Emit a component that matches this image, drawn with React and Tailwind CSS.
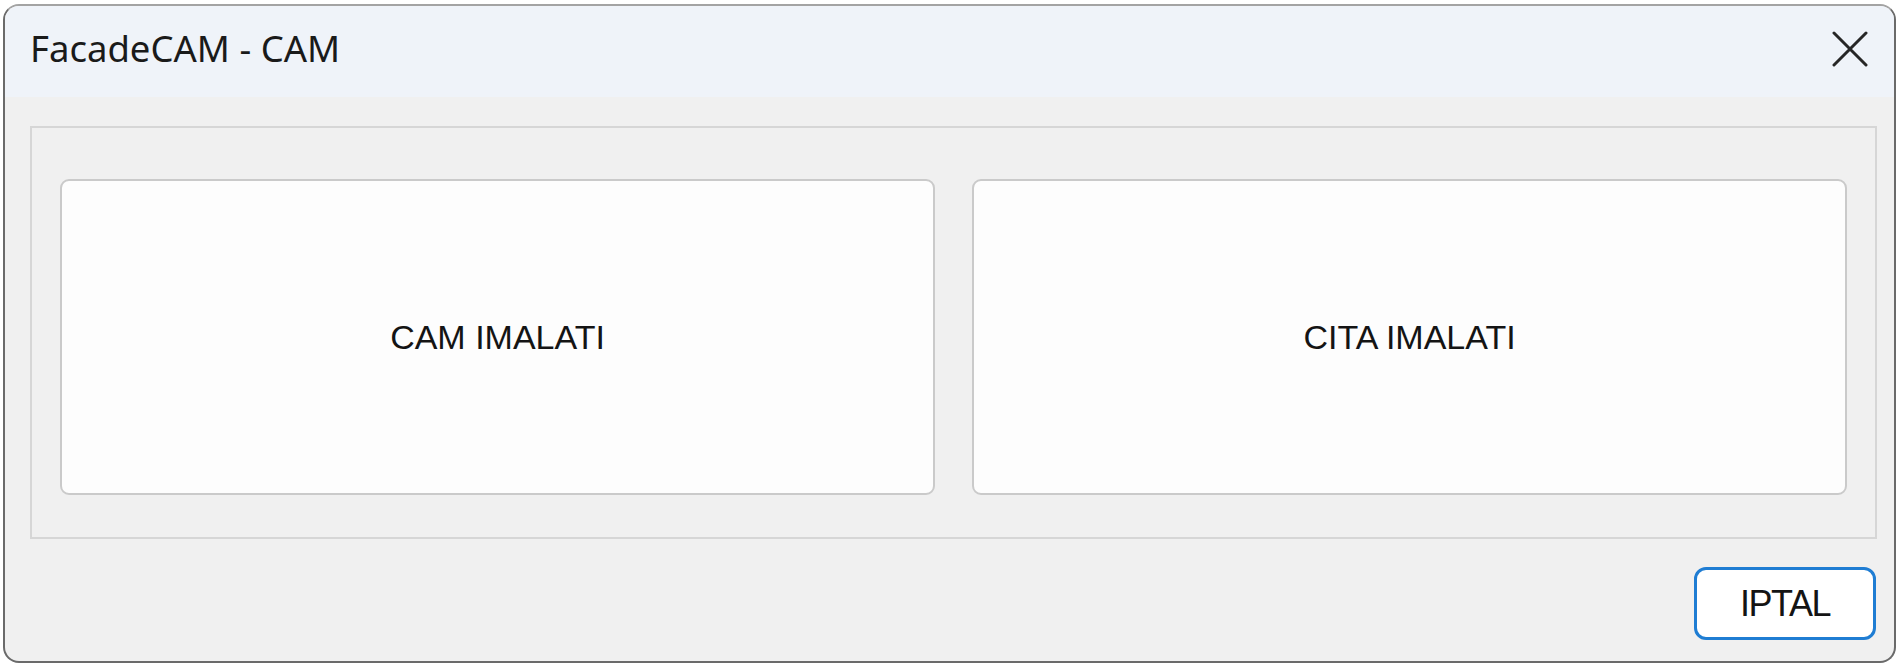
export default function App() {
  return (
    <div className="w-[1901px] h-[667px] bg-white overflow-hidden pt-[4px] pl-[3px]">
      <div className="w-[1893px] h-[659px] flex flex-col bg-[#f0f0f0] rounded-[16px] border-2 border-[#6a6a6a] border-t-[#a3a3a3] overflow-hidden">
        <div className="h-[91px] shrink-0 bg-[#eff3f9] flex items-center justify-between pl-[25px] pr-[26px]">
          <span className="text-[36.5px] leading-none text-[#1a1a1a] pb-[6px]" style={{ fontFamily: '"Noto Sans", "Open Sans", sans-serif' }}>
            FacadeCAM - CAM
          </span>
          <svg width="36" height="36" viewBox="0 0 36 36" className="mb-[6px]">
            <path d="M2 2 L34 34 M34 2 L2 34" stroke="#262626" strokeWidth="3" strokeLinecap="round" fill="none" />
          </svg>
        </div>
        <div className="flex flex-col pt-[29px]">
          <div className="ml-[25px] w-[1847px] h-[413px] border-2 border-[#d6d6d6] flex gap-[37px] pl-[28px] pr-[28px] pt-[51px] pb-[42px]">
            <div className="w-[875px] h-[316px] bg-[#fdfdfd] border-2 border-[#cacaca] rounded-[9px] flex items-center justify-center">
              <span className="text-[34px] leading-none text-[#141414]" style={{ fontFamily: '"Liberation Sans", Arial, sans-serif' }}>
                CAM IMALATI
              </span>
            </div>
            <div className="w-[875px] h-[316px] bg-[#fdfdfd] border-2 border-[#cacaca] rounded-[9px] flex items-center justify-center">
              <span className="text-[34px] leading-none text-[#141414]" style={{ fontFamily: '"Liberation Sans", Arial, sans-serif' }}>
                CITA IMALATI
              </span>
            </div>
          </div>
          <div className="flex justify-end mt-[28px] pr-[18px]">
            <div className="w-[182px] h-[73px] bg-white border-[3px] border-[#1f7dd3] rounded-[12px] flex items-center justify-center">
              <span className="text-[36px] leading-none tracking-[-1.5px] text-[#141414]" style={{ fontFamily: '"Liberation Sans", Arial, sans-serif' }}>
                IPTAL
              </span>
            </div>
          </div>
        </div>
      </div>
    </div>
  );
}
